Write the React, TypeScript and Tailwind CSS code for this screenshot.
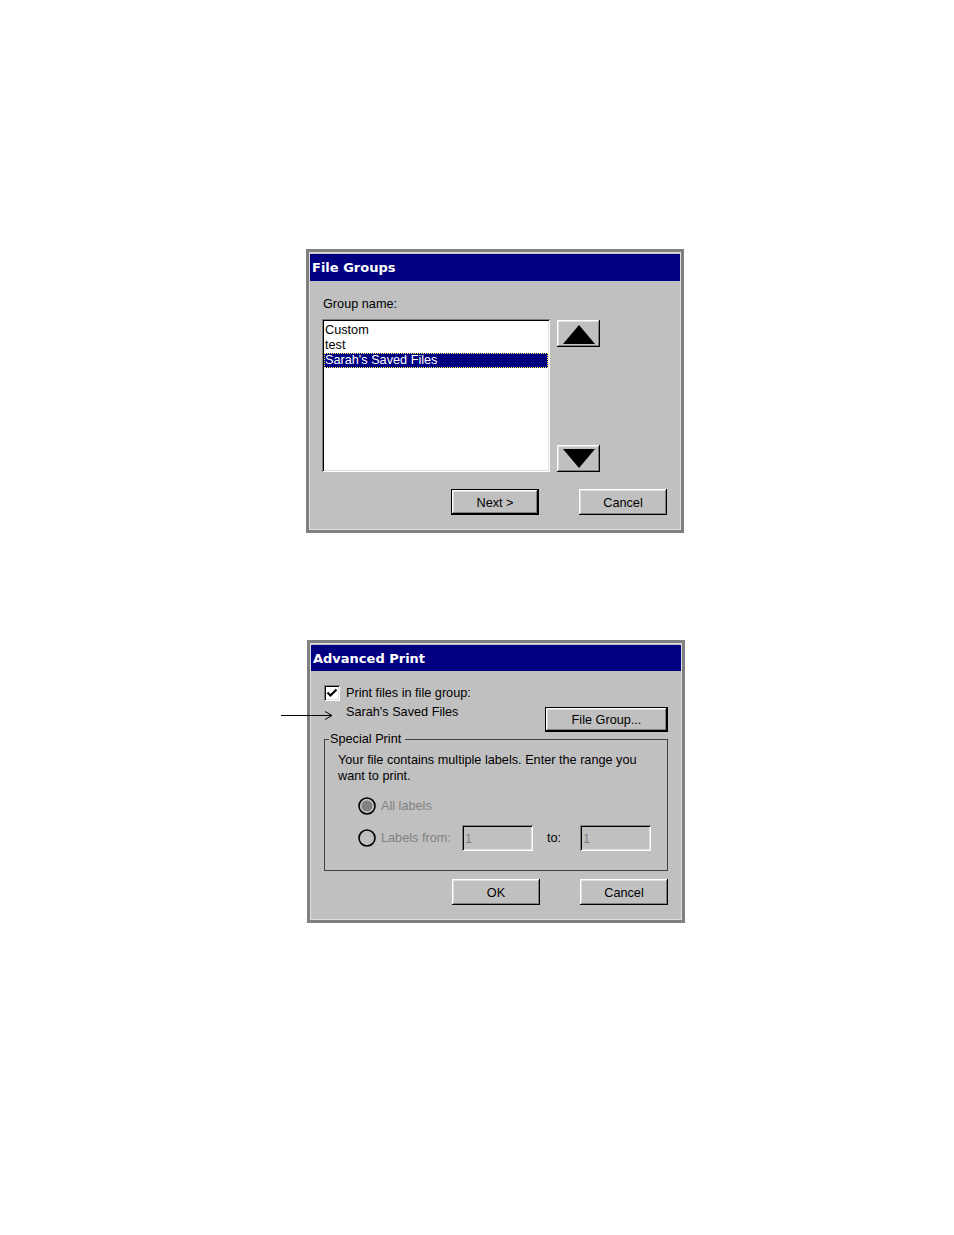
import React from 'react';

const FONT = "font-['Liberation_Sans',Arial,sans-serif]";

const raised =
  'shadow-[inset_-1px_-1px_#000,inset_1px_1px_#fff,inset_-2px_-2px_#808080,inset_2px_2px_#dfdfdf]';
const sunken =
  'shadow-[inset_1px_1px_#808080,inset_-1px_-1px_#fff,inset_2px_2px_#000,inset_-2px_-2px_#dfdfdf]';

type BtnProps = { label: string; w: number; isDefault?: boolean };

const Button: React.FC<BtnProps> = ({ label, w, isDefault }) => (
  <div
    style={{ width: w }}
    className={`h-[26px] flex items-center justify-center bg-[#c0c0c0] text-[12.7px] text-black ${
      isDefault ? 'border border-black' : ''
    }`}
  >
    <div className={`w-full h-full pt-[3px] flex items-center justify-center ${raised}`}>{label}</div>
  </div>
);

const ArrowButton: React.FC<{ dir: 'up' | 'down' }> = ({ dir }) => (
  <div className={`w-[43px] h-[27px] bg-[#c0c0c0] flex items-center justify-center ${raised}`}>
    <svg width="36" height="22" viewBox="0 0 36 22">
      {dir === 'up' ? (
        <polygon points="18,2 34,21 2,21" fill="#000" />
      ) : (
        <polygon points="2,1 34,1 18,20" fill="#000" />
      )}
    </svg>
  </div>
);

const Dialog: React.FC<{ title: string; titleH: number; children: React.ReactNode }> = ({
  title,
  titleH,
  children,
}) => (
  <div className="w-[378px] border-[3px] border-[#808080] bg-[#c0c0c0]">
    <div className="border border-[#dfdfdf] pt-[1px]">
      <div
        style={{ height: titleH }}
        className="bg-[#000080] text-white font-bold text-[13px] font-['DejaVu_Sans',sans-serif] pl-[2px] pt-[1px] flex items-center"
      >
        {title}
      </div>
      {children}
    </div>
  </div>
);

const Radio: React.FC<{ checked?: boolean }> = ({ checked }) => (
  <svg width="18" height="18" viewBox="0 0 18 18" className="shrink-0">
    <circle cx="9" cy="9" r="8" fill="#c0c0c0" stroke="#000" strokeWidth="1.6" />
    {checked && <circle cx="9" cy="9" r="5.5" fill="#808080" />}
  </svg>
);

const Field: React.FC = () => (
  <div className={`w-[71px] h-[26px] bg-[#c0c0c0] ${sunken} pl-[3px] pt-[1px] flex items-center text-[12.7px] text-[#808080]`}>
    1
  </div>
);

const FileGroups: React.FC = () => {
  const items = ['Custom', 'test', "Sarah's Saved Files"];
  return (
    <Dialog title="File Groups" titleH={27}>
      <div className="pl-[12px] pr-[13px] pt-[14px] pb-[14px] text-[12.7px]">
        <div className="h-[16px] leading-[16px] pl-[1px] pt-[1px]">Group name:</div>
        <div className="mt-[8px] flex gap-[7px]">
          <div className={`w-[228px] h-[153px] bg-white ${sunken} pt-[4px] px-[2px]`}>
            {items.map((it, i) =>
              i === 2 ? (
                <div
                  key={it}
                  className="h-[15px] leading-[13px] bg-[#000080] text-white border border-dotted border-[#ffff60]"
                >
                  {it}
                </div>
              ) : (
                <div key={it} className="h-[15px] leading-[15px] pl-[1px]">
                  {it}
                </div>
              )
            )}
          </div>
          <div className="h-[153px] pt-[1px] flex flex-col justify-between">
            <ArrowButton dir="up" />
            <ArrowButton dir="down" />
          </div>
        </div>
        <div className="mt-[17px] flex justify-end gap-[40px]">
          <Button label="Next >" w={88} isDefault />
          <Button label="Cancel" w={88} />
        </div>
      </div>
    </Dialog>
  );
};

const AdvancedPrint: React.FC = () => (
  <div className="relative">
    <svg width="54" height="10" viewBox="0 0 54 10" className="absolute left-[-26px] top-[70px]">
      <line x1="0" y1="5.5" x2="51" y2="5.5" stroke="#000" strokeWidth="1" />
      <polyline points="44,1.5 51,5.5 44,9.5" fill="none" stroke="#000" strokeWidth="1" />
    </svg>
    <Dialog title="Advanced Print" titleH={26}>
      <div className="pl-[13px] pr-[13px] pt-[14px] pb-[14px] text-[12.7px]">
        <div className="h-[16px] flex items-center">
          <div className={`w-[16px] h-[16px] bg-white ${sunken} flex items-center justify-center`}>
            <svg width="12" height="12" viewBox="0 0 12 12">
              <polyline points="1.5,5.5 4.5,8.5 10.5,2.5" fill="none" stroke="#000" strokeWidth="2.2" />
            </svg>
          </div>
          <span className="ml-[6px] pt-[2px]">Print files in file group:</span>
        </div>
        <div className="mt-[3px] h-[28px] flex justify-between items-start">
          <div className="pl-[22px] h-[17px] leading-[17px]">Sarah's Saved Files</div>
          <div className="mt-[3px]">
            <div className="w-[123px] h-[25px] border border-black">
              <div className={`w-full h-full pt-[3px] flex items-center justify-center ${raised}`}>File Group...</div>
            </div>
          </div>
        </div>
        <div className="relative mt-[7px] h-[132px] border border-[#404040]">
          <span className="absolute left-[4px] top-[-9px] pl-[1px] pr-[4px] leading-[16px] bg-[#c0c0c0]">
            Special Print
          </span>
          <div className="pt-[12px] pl-[13px] leading-[16px]">
            <div>Your file contains multiple labels. Enter the range you</div>
            <div>want to print.</div>
            <div className="mt-[13px] ml-[20px] h-[18px] flex items-center text-[#808080]">
              <Radio checked />
              <span className="ml-[5px]">All labels</span>
            </div>
            <div className="mt-[10px] ml-[20px] h-[26px] flex items-center">
              <Radio />
              <span className="ml-[5px] w-[81px] text-[#808080]">Labels from:</span>
              <Field />
              <span className="ml-[14px] w-[33px]">to:</span>
              <Field />
            </div>
          </div>
        </div>
        <div className="mt-[8px] flex justify-end gap-[40px]">
          <Button label="OK" w={88} />
          <Button label="Cancel" w={88} />
        </div>
      </div>
    </Dialog>
  </div>
);

export default function App() {
  return (
    <div className={`w-[954px] h-[1235px] bg-white text-black ${FONT} overflow-hidden`}>
      <div className="pt-[249px] pl-[306px]">
        <FileGroups />
      </div>
      <div className="mt-[107px] pl-[307px]">
        <AdvancedPrint />
      </div>
    </div>
  );
}
